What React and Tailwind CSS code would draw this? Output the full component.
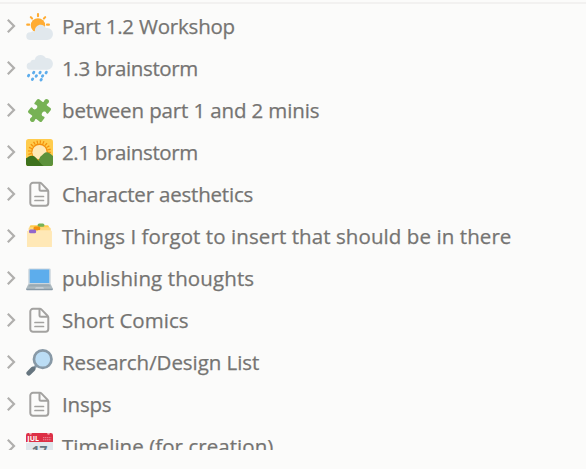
import React from "react";

const Emoji = ({ children }) => (
  <svg viewBox="0 0 36 36" className="h-[27px] w-[27px] shrink-0">{children}</svg>
);

const Sun = () => (
  <Emoji>
    <g stroke="#FFAC33" strokeWidth="2.800" strokeLinecap="round">
      <path d="M16 1.400v3M6.400 5.500l1.700 1.700M25.600 5.500l-1.700 1.700M1.600 15.500h2.600M28 15.500h2.600" />
    </g>
    <circle cx="16" cy="16.500" r="9.600" fill="#FFAC33" />
    <path fill="#E1E8ED" d="M28.200 20c-.6 0-1.100.1-1.600.2C25.400 17.600 22.700 15.800 19.600 15.800c-4.200 0-7.700 3.400-7.700 7.700 0 .4 0 .7.100 1a4.200 4.200 0 0 0-1.500-.3c-1.700 0-3.100 0-3.700 1.500-.4-.1-.8-.2-1.200-.2A5.200 5.200 0 0 0 5.600 36h22.600A7.800 8 0 0 0 28.200 20z" />
  </Emoji>
);

const Rain = () => (
  <Emoji>
    <path fill="#E1E8ED" d="M28.200 4c-.6 0-1.100.1-1.600.2C25.400 1.800 22.700 0 19.600 0c-4.200 0-7.400 2.600-7.900 6.400-3.300-.9-5.600 1-5.900 3.500A4.800 4.800 0 0 0 5.600 19.500h22.600A7.750 7.750 0 0 0 28.200 4z" />
    <g stroke="#5DADEC" strokeWidth="3.700" strokeLinecap="round">
      <path d="M10.500 23l-.6 .9M19 23l-.6 .9M27.200 23l-.6 .9M3.700 27l-.6 .9M14 27.500l-.6 .9M22.400 27.500l-.6 .9M9 31.800l-.6 .9M20.500 32.500l-.6 .9" />
    </g>
  </Emoji>
);

const Puzzle = () => (
  <Emoji>
    <path fill="#77B255" transform="rotate(38 18 18)" d="M8.500 6.500h5.300c1.500 0 1.800-1 1.300-2.200C14 1.500 15.500-.5 18-.5s4 2 2.900 4.800c-.5 1.200-.2 2.200 1.300 2.200h5.300a2 2 0 0 1 2 2v5.200c0 1.500-1 1.800-2.200 1.300-2.600-1.100-4.600.5-4.600 3s2 4.100 4.600 3c1.200-.5 2.200-.2 2.200 1.300v5.200a2 2 0 0 1-2 2h-5.300c-1.500 0-1.800 1-1.300 2.200 1.100 2.800-.4 4.800-2.900 4.800s-4-2-2.900-4.800c.5-1.200.2-2.200-1.300-2.200H8.500a2 2 0 0 1-2-2v-5.200c0-1.500 1-1.800 2.200-1.300 2.600 1.100 4.600-.5 4.600-3s-2-4.100-4.600-3c-1.200.5-2.200.2-2.200-1.300V8.500a2 2 0 0 1 2-2z" />
  </Emoji>
);

const Sunrise = () => (
  <Emoji>
    <rect width="36" height="36" rx="3.500" fill="#FFCC4D" />
    <circle cx="18" cy="17" r="13" stroke="#F4900C" strokeWidth="4.500" strokeDasharray="1.600 2.480" fill="none" />
    <circle cx="18" cy="17" r="11" fill="#F4900C" />
    <circle cx="18" cy="17.500" r="9.500" fill="#FFE8B6" />
    <path fill="#5C913B" d="M36 22.500c-2-1.700-4.500-5-8-5-3.500 0-5.500 2.800-9 6.300L13 36h19.500a3.500 3.500 0 0 0 3.500-3.500z" />
    <path fill="#3E721D" d="M0 25.500c2-.5 4-3.300 8-3.300 4.300 0 6.500 4.400 10 8.300 2 2.300 4 4.500 6 5.500H3.500A3.500 3.500 0 0 1 0 32.500z" />
  </Emoji>
);

const Folder = () => (
  <Emoji>
    <path fill="#FFCC4D" d="M5 4.500c.2-1 .8-1.500 1.800-1.500h21.500c1.400 0 2.300.7 2.300 2.200V12H5z" />
    <rect x="15.500" y=".5" width="9" height="4.500" rx="2" fill="#77B255" />
    <path fill="#FFD983" d="M3.500 7.500c0-1.400.8-2 2-2h24.800c1.600 0 2.700.8 2.700 2.200V14H3.500z" />
    <rect x="10" y="4.500" width="9" height="5" rx="2" fill="#F4900C" />
    <path fill="#FFE8B6" d="M1.300 10.500h13c1.500 0 1.500-1 3-1H32c1.500 0 2.600.8 2.600 2.200V32H1.300z" />
    <rect x="4" y="8.500" width="9.500" height="5" rx="2" fill="#9266CC" />
  </Emoji>
);

const Laptop = () => (
  <Emoji>
    <path fill="#CCD6DD" d="M3 6.500C3 5 4 4.500 5 4.500h26c1 0 2 .5 2 2V26H3z" />
    <path fill="#5DADEC" d="M5 6h26v18H5z" />
    <path fill="#AEBBC1" d="M3 25.500h30l3 6.500H0z" />
    <path fill="#9AAAB4" d="M5 25.800h26l1.700 3H3.300z" />
    <path fill="#CCD6DD" d="M13 29.500h10l1 2.500H12z" />
    <path fill="#8899A6" d="M0 31.500h36c0 1.500-1 2.200-2 2.200H2c-1 0-2-.7-2-2.200z" />
  </Emoji>
);

const Magnifier = () => (
  <Emoji>
    <path stroke="#8899A6" strokeWidth="3.500" d="M10 26l5-5" />
    <path stroke="#66757F" strokeWidth="6.500" strokeLinecap="round" d="M3.800 32.200l5.500-5.500" />
    <circle cx="22.300" cy="13.500" r="11.700" fill="#BBDDF5" stroke="#8899A6" strokeWidth="3.600" />
  </Emoji>
);

const Calendar = () => (
  <Emoji>
    <path fill="#E0E7EC" d="M36 32a4 4 0 0 1-4 4H4a4 4 0 0 1-4-4V9h36z" />
    <path fill="#DD2F45" d="M0 3a3 3 0 0 1 3-3h30a3 3 0 0 1 3 3v9H0z" />
    <circle cx="6" cy=".6" r="1.700" fill="#F3AAB4" />
    <circle cx="30" cy=".6" r="1.700" fill="#F3AAB4" />
    <text x="1.800" y="10.500" fill="#fff" className="font-['Open_Sans'] text-[10px] font-bold" textLength="15.500" lengthAdjust="spacingAndGlyphs">JUL</text>
    <path stroke="#F4ABBA" strokeWidth="1.300" strokeDasharray="1.400 1.300" d="M23 6.200h11M23 9h11" />
    <text x="7.500" y="30.300" fill="#66757F" className="font-['Open_Sans'] text-[20px] font-bold" textLength="21" lengthAdjust="spacingAndGlyphs">17</text>
  </Emoji>
);

const Page = () => (
  <svg viewBox="0 0 27 27" className="h-[27px] w-[27px] shrink-0" fill="none" stroke="#A3A2A0" strokeWidth="2" strokeLinecap="round" strokeLinejoin="round">
    <path d="M7 1.800h6.800c.7 0 1.300.3 1.800.8l5.900 6.100c.5.500.8 1.100.8 1.800v11.600a2.700 2.700 0 0 1-2.700 2.700H7a2.700 2.700 0 0 1-2.700-2.700V4.500A2.700 2.700 0 0 1 7 1.800z" />
    <path d="M13.500 2.200v6c0 .9.600 1.500 1.500 1.500h6.500" />
    <path d="M9 15.500h8.500M9 19.500h8.500" strokeWidth="1.700" />
  </svg>
);

const rows = [
  [Sun, "Part 1.2 Workshop", "tracking-[-0.21px]"],
  [Rain, "1.3 brainstorm", "tracking-[-0.36px]"],
  [Puzzle, "between part 1 and 2 minis", "tracking-[-0.13px]"],
  [Sunrise, "2.1 brainstorm", "tracking-[-0.36px]"],
  [Page, "Character aesthetics", "tracking-[-0.2px]"],
  [Folder, "Things I forgot to insert that should be in there", "tracking-[0.08px]"],
  [Laptop, "publishing thoughts", "tracking-[0.11px]"],
  [Page, "Short Comics", "tracking-[0.04px]"],
  [Magnifier, "Research/Design List", "tracking-[-0.06px]"],
  [Page, "Insps", "tracking-[-0.2px]"],
  [Calendar, "Timeline (for creation)", "tracking-[0.05px]"],
];

export default function App() {
  return (
    <div className="h-[469px] w-[586px] overflow-hidden bg-[#fbfbfa] pt-[2px] font-['Open_Sans',sans-serif]">
      <div className="h-[448px] overflow-hidden border-t-2 border-[#f2f1f0] pt-[1px]">
        {rows.map(([Icon, label, tracking]) => (
          <div key={label} className="flex h-[42px] items-center pl-[6px]">
            <svg viewBox="0 0 10 16" className="mr-[10px] h-4 w-[10px] shrink-0" fill="none" stroke="#B0AFAD" strokeWidth="2.200">
              <path d="M1.800 1.800L8 8l-6.200 6.200" />
            </svg>
            <Icon />
            <span className={"ml-[9px] whitespace-nowrap text-[20.500px] font-normal leading-[42px] text-[#757472] [-webkit-text-stroke:0.25px_#757472] " + tracking}>{label}</span>
          </div>
        ))}
      </div>
    </div>
  );
}
